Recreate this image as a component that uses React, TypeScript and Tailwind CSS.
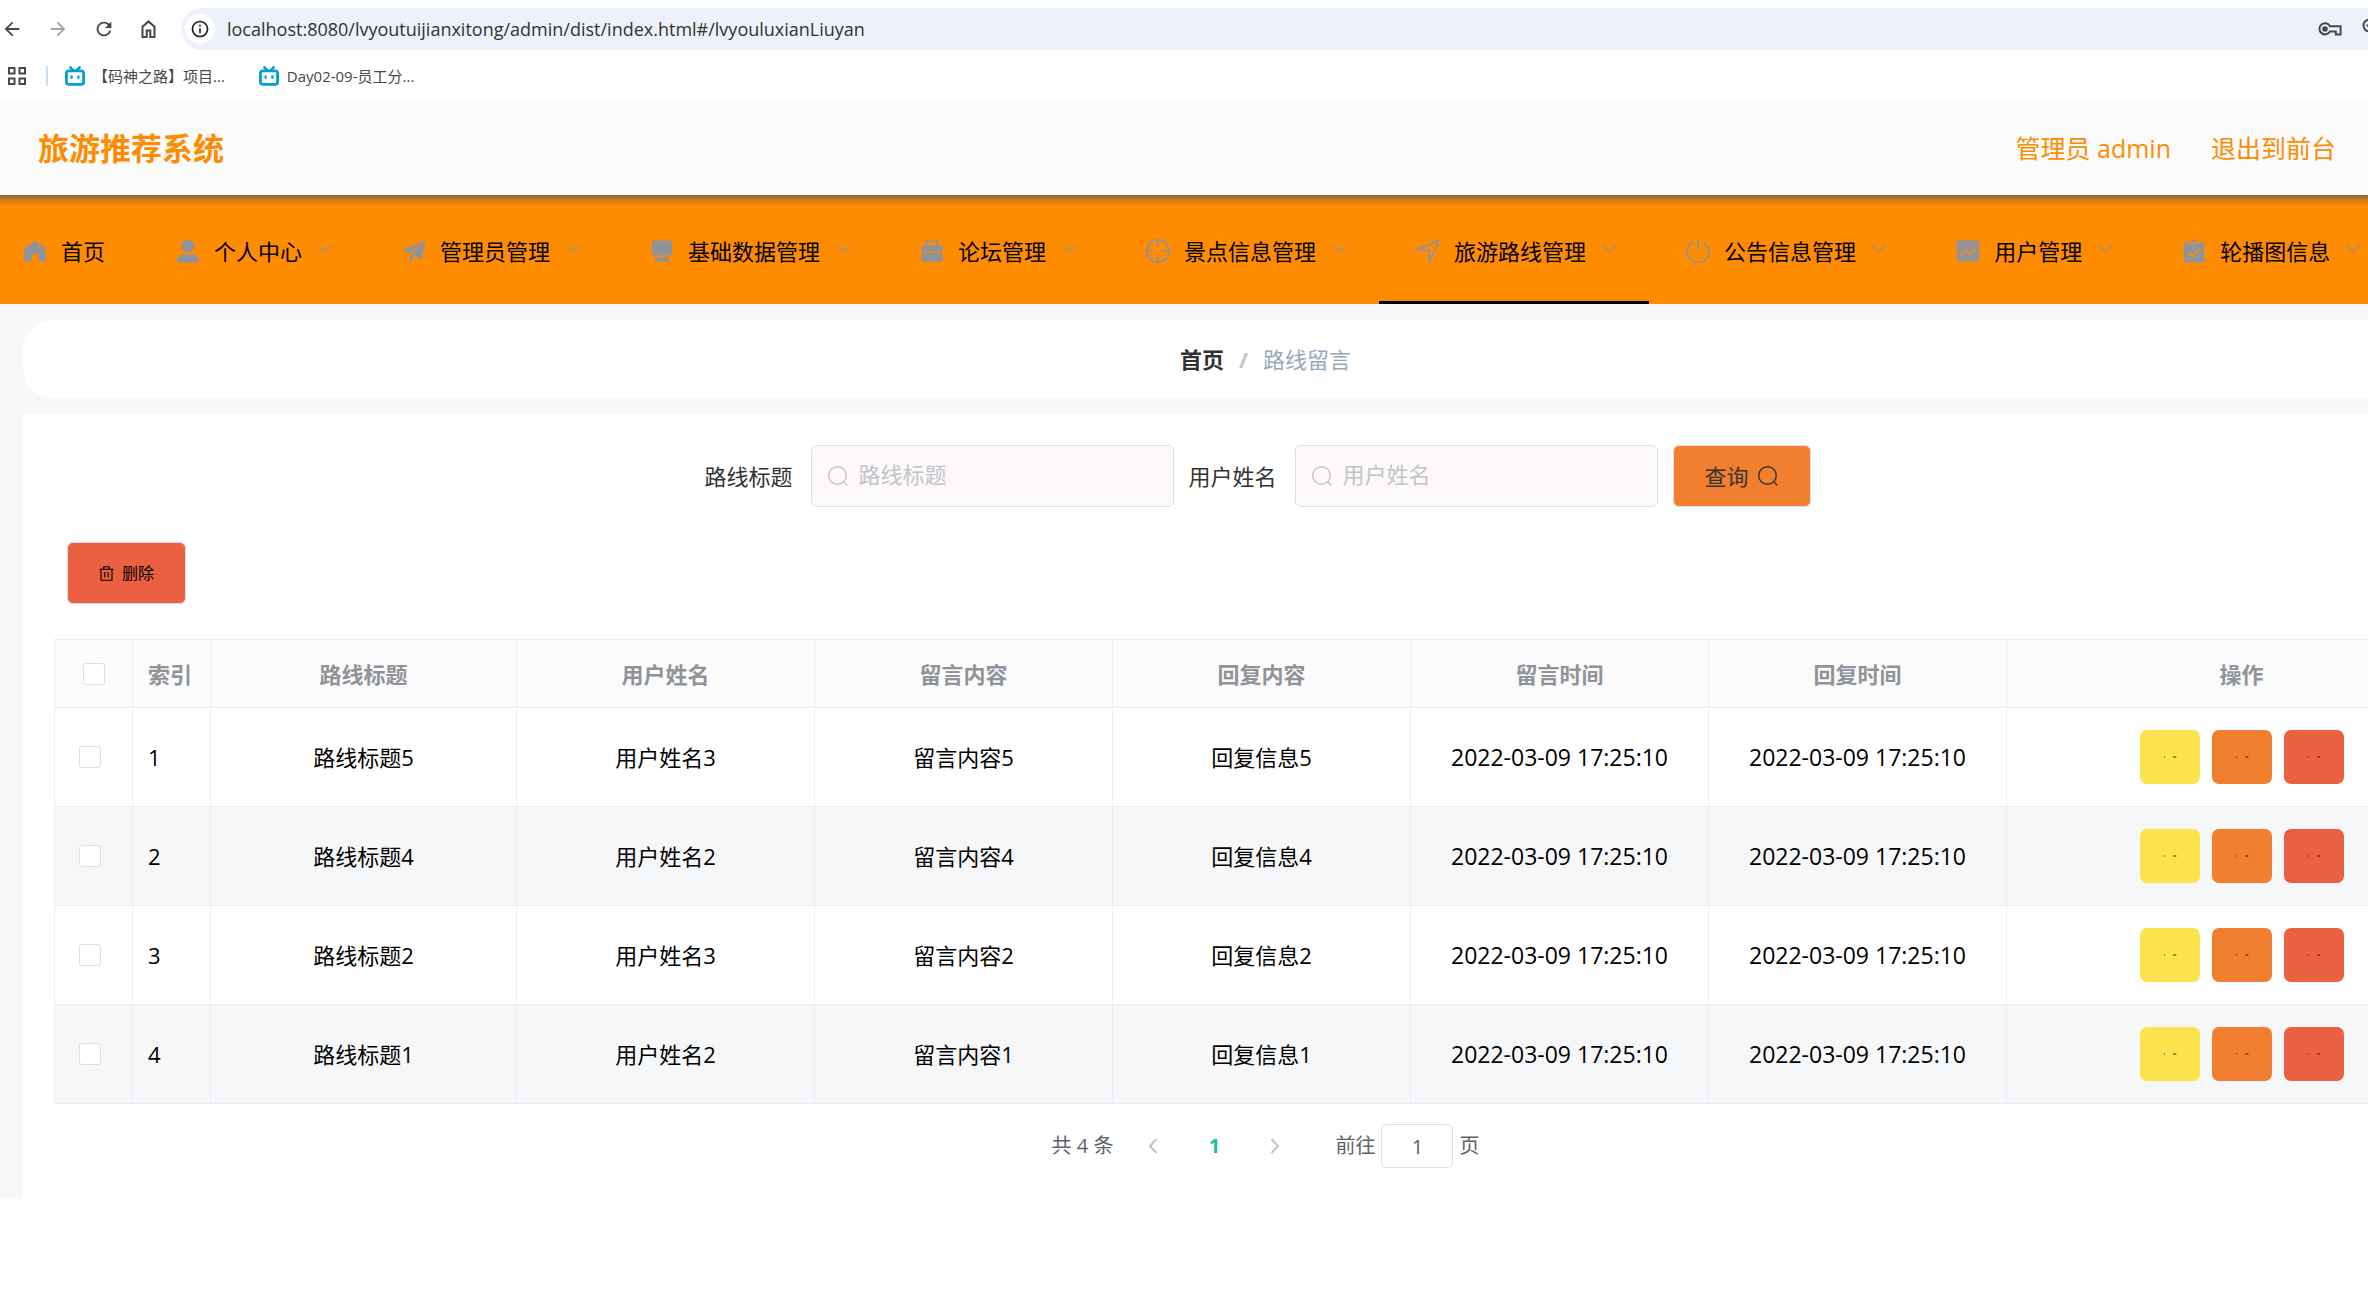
import React, { useState } from 'react';
import { MdArrowBack, MdArrowForward, MdRefresh, MdOutlineInfo } from 'react-icons/md';

interface Message {
  id: number;
  title: string;
  user: string;
  content: string;
  reply: string;
  createdAt: string;
  repliedAt: string;
}

interface MenuItem {
  label: string;
  icon: React.ReactNode;
}

const MESSAGES: Message[] = [
  { id: 1, title: '路线标题5', user: '用户姓名3', content: '留言内容5', reply: '回复信息5', createdAt: '2022-03-09 17:25:10', repliedAt: '2022-03-09 17:25:10' },
  { id: 2, title: '路线标题4', user: '用户姓名2', content: '留言内容4', reply: '回复信息4', createdAt: '2022-03-09 17:25:10', repliedAt: '2022-03-09 17:25:10' },
  { id: 3, title: '路线标题2', user: '用户姓名3', content: '留言内容2', reply: '回复信息2', createdAt: '2022-03-09 17:25:10', repliedAt: '2022-03-09 17:25:10' },
  { id: 4, title: '路线标题1', user: '用户姓名2', content: '留言内容1', reply: '回复信息1', createdAt: '2022-03-09 17:25:10', repliedAt: '2022-03-09 17:25:10' },
];

const COLUMNS = ['路线标题', '用户姓名', '留言内容', '回复内容', '留言时间', '回复时间'];

const MENU: MenuItem[] = [
  {
    label: '个人中心',
    icon: (
      <>
        <circle cx="12" cy="7" r="6.4" />
        <path d="M1 23.5V21a5.5 5.5 0 0 1 5.5-5.5h11A5.5 5.5 0 0 1 23 21v2.5z" />
      </>
    ),
  },
  {
    label: '管理员管理',
    icon: (
      <>
        <path d="M.5 10.8 23.5 1 7.5 14.2z" />
        <path d="M23.5 1 20 20.6 9 15.5z" />
        <path d="m7.6 16 4.7 3.2-4.6 4.6z" />
      </>
    ),
  },
  {
    label: '基础数据管理',
    icon: (
      <>
        <path d="M2.4 1.5h19.2L22.6 14a3 3 0 0 1-5 1.8 2.7 2.7 0 0 1-3.8 0 2.7 2.7 0 0 1-3.8 0 2.7 2.7 0 0 1-3.8 0A3 3 0 0 1 1.4 14z" />
        <path d="M5 18.2h2l1.5-.8 2 .8h3l2-.8 1.5.8h2v4.3H5z" />
      </>
    ),
  },
  {
    label: '论坛管理',
    icon: (
      <>
        <path d="M6 6.5v-5h12v5h-1.8V3.2H7.8v3.3z" />
        <path d="M1.3 6.5h21.4v6.2H1.3zM1.3 14h21.4v8.7H1.3z" />
      </>
    ),
  },
  {
    label: '景点信息管理',
    icon: (
      <g fill="none" stroke="currentColor" strokeWidth="1.7">
        <circle cx="12" cy="12" r="11.1" />
        <path d="M12 .8v7M12 16.2v7M.8 12h7M16.2 12h7" />
      </g>
    ),
  },
  {
    label: '旅游路线管理',
    icon: <path fill="none" stroke="currentColor" strokeWidth="1.8" d="M1.5 10.2 22.8 1.5 13.8 22 12.6 11.8z" />,
  },
  {
    label: '公告信息管理',
    icon: (
      <g fill="none" stroke="currentColor" strokeWidth="1.7">
        <path d="M7.5 3A10.8 10.8 0 1 0 16.5 3" />
        <path d="M12 0v11" />
      </g>
    ),
  },
  {
    label: '用户管理',
    icon: (
      <>
        <path d="M1 1.5h22v21H1z" />
        <path d="m5 17 5-5.4 4 3.4 4.4-5" fill="none" stroke="#ff8c00" strokeWidth="1.5" />
        <circle cx="19.4" cy="7.6" r="1" fill="#ff8c00" />
      </>
    ),
  },
  {
    label: '轮播图信息',
    icon: (
      <>
        <path d="M8.4.5h7.4v2.6H8.4z" />
        <path d="M1.8 3.6h5.4v1.2h9.8V3.6h5.4v19.9H1.8z" />
        <path d="m6 13.4 4.6 4.4 7.4-8" fill="none" stroke="#ff8c00" strokeWidth="1.6" />
      </>
    ),
  },
];

const ACTIONS = [
  { label: '详情', className: 'bg-[#fde44e]' },
  { label: '修改', className: 'bg-[#f27e2f]' },
  { label: '删除', className: 'bg-[#eb6041]' },
];

function BookmarkIcon() {
  return (
    <svg width="20" height="20" viewBox="0 0 20 20" fill="none" stroke="#00a1d6" strokeLinecap="round">
      <rect x="1.4" y="4.8" width="17.2" height="13.6" rx="2.4" strokeWidth="2.8" />
      <path d="m5.4 1.4 2.8 3M14.6 1.4l-2.8 3" strokeWidth="2.6" />
      <path d="M6.6 10.4v1.6M13.4 10.4v1.6" strokeWidth="2.2" />
    </svg>
  );
}

function SearchIcon({ className }: { className?: string }) {
  return (
    <svg className={className} width="22" height="22" viewBox="0 0 22 22" fill="none" stroke="currentColor" strokeWidth="1.4">
      <circle cx="10.5" cy="10.5" r="8.8" />
      <path d="m16.6 16.6 3.8 3.8" />
    </svg>
  );
}

function BrowserBar() {
  return (
    <div className="bg-white text-[#474747]">
      <div className="flex items-center pt-2">
        <div className="flex items-center gap-6 pl-px">
          <button aria-label="后退"><MdArrowBack size={22} /></button>
          <button aria-label="前进" className="text-[#a3a3a3]"><MdArrowForward size={22} /></button>
          <button aria-label="刷新"><MdRefresh size={22} /></button>
          <button aria-label="主页">
            <svg width="22" height="22" viewBox="0 0 22 22" fill="none" stroke="currentColor" strokeWidth="2">
              <path d="M3.5 19V8.8L9.5 3.4l6 5.4V19h-4.2v-6.4H7.7V19z" />
            </svg>
          </button>
        </div>
        <div className="-mr-10 ml-5 flex h-[42px] flex-1 items-center rounded-full bg-[#ecf1fa] pl-1">
          <span className="flex h-[30px] w-[30px] items-center justify-center rounded-full bg-white text-[#1f1f1f]">
            <MdOutlineInfo size={20} />
          </span>
          <input
            aria-label="地址"
            className="ml-3 flex-1 bg-transparent text-[18px] leading-6 text-[#333] outline-none"
            defaultValue="localhost:8080/lvyoutuijianxitong/admin/dist/index.html#/lvyouluxianLiuyan"
          />
          <svg className="mr-5" width="24" height="16" viewBox="0 0 24 16" fill="none" stroke="currentColor" strokeWidth="2">
            <path d="M12 5.2h10.6v8.2h-4.8v-3H12a5.6 5.6 0 1 1 0-5.2z" />
            <circle cx="7" cy="8" r="1.8" fill="currentColor" />
          </svg>
          <svg className="mr-6" width="22" height="22" viewBox="0 0 22 22" fill="none" stroke="currentColor" strokeWidth="2">
            <circle cx="7.5" cy="7.5" r="6" />
            <path d="M7.5 4.5v6M4.5 7.5h6M12 12l6 6" />
          </svg>
        </div>
      </div>
      <div className="flex h-[51px] items-center text-[15px] leading-5">
        <svg className="ml-2" width="18" height="18" viewBox="0 0 18 18" fill="none" stroke="currentColor" strokeWidth="2">
          <path d="M1 1h5.5v5.5H1zM11.5 1H17v5.5h-5.5zM1 11.5h5.5V17H1zM11.5 11.5H17V17h-5.5z" />
        </svg>
        <span className="ml-5 h-5 w-[2px] bg-[#c9dcfb]" />
        <a href="#course" className="ml-[17px] flex items-center gap-2">
          <BookmarkIcon />
          【码神之路】项目...
        </a>
        <a href="#day02" className="ml-[34px] flex items-center gap-2">
          <BookmarkIcon />
          Day02-09-员工分...
        </a>
      </div>
    </div>
  );
}

function NavIcon({ children }: { children: React.ReactNode }) {
  return (
    <span className="mr-2 flex w-9 justify-center text-[#909399]">
      <svg width="24" height="24" viewBox="0 0 24 24" fill="currentColor">{children}</svg>
    </span>
  );
}

function NavMenu() {
  const [active, setActive] = useState('旅游路线管理');

  return (
    <nav className="flex h-[109px] overflow-hidden bg-[#ff8c00] bg-[linear-gradient(to_bottom,#80603a_0px,#c27a26_4px,#ff8c00_11px)] text-[22px] leading-8 text-black">
      <a href="#home" className="flex shrink-0 items-center pt-[2px] pr-[34px] pl-[17px]">
        <NavIcon><path d="M12 1.5 22.8 10v12.6h-7.3v-7.3H8.9v7.3H1.2V10z" /></NavIcon>
        首页
      </a>
      {MENU.map((item) => (
        <button
          key={item.label}
          onClick={() => setActive(item.label)}
          className={`flex shrink-0 items-center border-b-[3px] pt-[6px] pr-[29px] pl-[31px] ${active === item.label ? 'border-black' : 'border-transparent'}`}
        >
          <NavIcon>{item.icon}</NavIcon>
          {item.label}
          <svg className="ml-3 text-[#909399]" width="22" height="22" viewBox="0 0 22 22" fill="none" stroke="currentColor" strokeWidth="1.2">
            <path d="m4 5 7 7 7-7" />
          </svg>
        </button>
      ))}
    </nav>
  );
}

function SearchField({ id, label }: { id: string; label: string }) {
  return (
    <div className="mr-[15px] flex items-center">
      <label htmlFor={id} className="mr-[18px]">{label}</label>
      <div className="relative">
        <SearchIcon className="absolute top-5 left-4 text-[#c0c4cc]" />
        <input
          id={id}
          placeholder={label}
          className="h-[62px] w-[363px] rounded-md border border-[#dcdfe6] bg-[#fdf9f8] pr-5 pb-1 pl-[47px] outline-none placeholder:text-[#c0c4cc]"
        />
      </div>
    </div>
  );
}

function Checkbox({ label }: { label: string }) {
  return (
    <input
      type="checkbox"
      aria-label={label}
      className="block h-[22px] w-[22px] appearance-none rounded-[3px] border border-[#dcdfe6] bg-white checked:bg-[#13c29b]"
    />
  );
}

function MessageTable() {
  return (
    <table className="w-full table-fixed border-collapse border border-[#ebeef5] text-[22px] leading-8 text-black">
      <thead>
        <tr className="h-[68px] bg-[#fbfbfb] text-[#909399]">
          <th className="w-[78px] border border-[#ebeef5]">
            <div className="flex justify-center"><Checkbox label="全选" /></div>
          </th>
          <th className="w-[78px] border border-[#ebeef5] pl-[15px] text-left">索引</th>
          {COLUMNS.map((name, i) => (
            <th key={name} className={`border border-[#ebeef5] ${i === 0 ? 'w-[306px]' : 'w-[298px]'}`}>{name}</th>
          ))}
          <th className="border border-[#ebeef5]">操作</th>
        </tr>
      </thead>
      <tbody>
        {MESSAGES.map((row) => (
          <tr key={row.id} className="h-[99px] text-center even:bg-[#f6f7f9]">
            <td className="border border-[#ebeef5] pl-6"><Checkbox label={row.title} /></td>
            <td className="border border-[#ebeef5] pl-[15px] text-left">{row.id}</td>
            <td className="border border-[#ebeef5]">{row.title}</td>
            <td className="border border-[#ebeef5]">{row.user}</td>
            <td className="border border-[#ebeef5]">{row.content}</td>
            <td className="border border-[#ebeef5]">{row.reply}</td>
            <td className="border border-[#ebeef5] text-[23px]">{row.createdAt}</td>
            <td className="border border-[#ebeef5] text-[23px]">{row.repliedAt}</td>
            <td className="border border-[#ebeef5]">
              <div className="flex justify-center gap-3">
                {ACTIONS.map((action) => (
                  <button
                    key={action.label}
                    aria-label={action.label}
                    className={`flex h-[54px] w-[60px] items-center justify-center rounded-[7px] ${action.className}`}
                  >
                    <svg width="14" height="2" viewBox="0 0 14 2" fill="#222">
                      <rect x="1" y="0" width="1" height="2" opacity="0.5" />
                      <rect x="10" y="0.3" width="3.4" height="1.4" opacity="0.65" />
                    </svg>
                  </button>
                ))}
              </div>
            </td>
          </tr>
        ))}
      </tbody>
    </table>
  );
}

function Pagination() {
  return (
    <div className="mt-5 flex items-center justify-center text-[20px] leading-7 text-[#606266]">
      <span>共 4 条</span>
      <div className="ml-5 flex items-center text-[#c0c4cc]">
        <button aria-label="上一页" className="flex w-10 justify-center">
          <svg width="12" height="18" viewBox="0 0 12 18" fill="none" stroke="currentColor" strokeWidth="2"><path d="M9.5 2 3 9l6.5 7" /></svg>
        </button>
        <button className="w-[82px] font-bold text-[#13c29b]">1</button>
        <button aria-label="下一页" className="flex w-10 justify-center">
          <svg width="12" height="18" viewBox="0 0 12 18" fill="none" stroke="currentColor" strokeWidth="2"><path d="M2.5 2 9 9l-6.5 7" /></svg>
        </button>
      </div>
      <label htmlFor="page" className="ml-10">前往</label>
      <input
        id="page"
        defaultValue="1"
        className="mx-[6px] h-11 w-[72px] rounded-md border border-[#dcdfe6] bg-white text-center outline-none"
      />
      <span>页</span>
    </div>
  );
}

export default function App() {
  return (
    <div className="min-h-screen overflow-hidden bg-white font-['Open_Sans','Noto_Sans_CJK_SC',sans-serif]">
      <BrowserBar />
      <header className="flex h-[94px] items-center justify-between bg-[#fbfbfb] pr-8 pl-[38px] text-[#ff8c00]">
        <h1 className="text-[31px] leading-10 font-bold">旅游推荐系统</h1>
        <div className="flex gap-10 text-[25px] leading-9">
          <span>管理员 admin</span>
          <a href="#front">退出到前台</a>
        </div>
      </header>
      <NavMenu />

      {/* content runs past the right side of the window */}
      <main className="bg-[#f7f8fa] pt-4 pl-[23px]">
        <div className="-mr-[140px]">
          <div className="flex h-[78px] items-center justify-center gap-[15px] rounded-[30px] bg-white text-[22px] leading-8">
            <a href="#home" className="font-bold text-[#303133]">首页</a>
            <span className="font-bold text-[#c0c4cc]">/</span>
            <span className="text-[#97a8be]">路线留言</span>
          </div>

          <section className="mt-4 bg-white p-[31px]">
            <form className="flex items-center justify-center text-[22px] leading-8 text-[#333]" onSubmit={(e) => e.preventDefault()}>
              <SearchField id="title" label="路线标题" />
              <SearchField id="user" label="用户姓名" />
              <button type="submit" className="mr-4 flex h-[62px] w-[138px] items-center justify-center gap-2 rounded-md border border-[#dcdfe6] bg-[#f27e2f]">
                查询
                <SearchIcon />
              </button>
            </form>
            <button className="my-[35px] ml-[13px] flex h-[62px] w-[119px] items-center justify-center gap-2 rounded-md border border-[#dcdfe6] bg-[#eb6041] text-[16px] leading-6 text-black">
              <svg width="15" height="15" viewBox="0 0 15 15" fill="none" stroke="currentColor" strokeWidth="1.1">
                <path d="M.5 3.2h14M4.8 3V.8h5.4V3M2 3.2v11h11v-11M5.8 6v5.5M9.2 6v5.5" />
              </svg>
              删除
            </button>
            <MessageTable />
            <Pagination />
          </section>
        </div>
      </main>
    </div>
  );
}
